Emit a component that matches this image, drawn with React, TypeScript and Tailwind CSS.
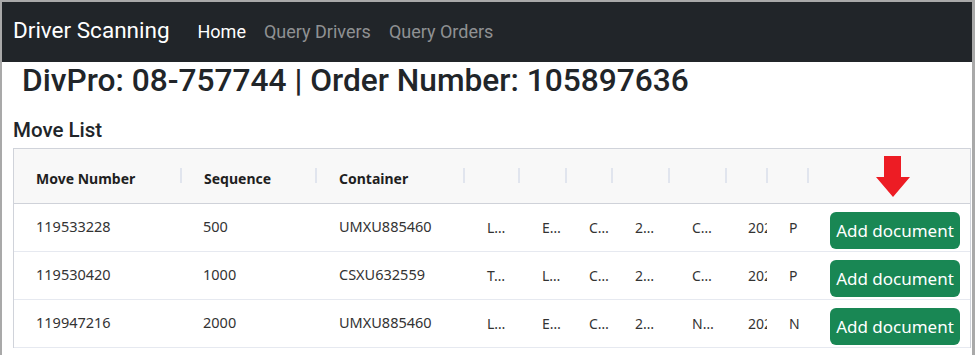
import React from 'react';

const cols = 'grid grid-cols-[168px_135px_148px_55px_47px_46px_57px_57px_41px_41px_1fr]';

const rows = [
  { move: '119533228', seq: '500', cont: 'UMXU885460', rest: ['L…', 'E…', 'C…', '2…', 'C…'], p: 'P' },
  { move: '119530420', seq: '1000', cont: 'CSXU632559', rest: ['T…', 'L…', 'C…', '2…', 'C…'], p: 'P' },
  { move: '119947216', seq: '2000', cont: 'UMXU885460', rest: ['L…', 'E…', 'C…', '2…', 'N…'], p: 'N' },
];

const HeadCell = ({ label }: { label?: string }) => (
  <div className="flex items-center justify-between pl-[22px]">
    <span className="pt-[5px] text-[14px] font-bold text-[#1f1f1f]">{label}</span>
    <span className="w-[2px] h-[15px] bg-[#e1e5ee]" />
  </div>
);

const App = () => {
  return (
    <div className="w-[975px] h-[355px] overflow-hidden bg-white border-t-2 border-l-2 border-r-[3px] border-[#a9a9a9]" style={{ fontFamily: 'Roboto, sans-serif' }}>
      {/* Navbar */}
      <nav className="h-[60px] bg-[#212529] flex items-center pl-[11px] pr-2">
        <span className="text-[22.5px] text-white mr-[28px] pb-[2px]">Driver Scanning</span>
        <div className="flex items-center gap-[18px] text-[18px] pb-[2px]">
          <span className="text-white">Home</span>
          <span className="text-[#8f9193]">Query Drivers</span>
          <span className="text-[#8f9193]">Query Orders</span>
        </div>
      </nav>

      <h1 className="pl-[20px] text-[31.7px] leading-[1.2] font-medium text-[#212529]">
        DivPro: 08-757744 | Order Number: 105897636
      </h1>

      <h2 className="pl-[11px] mt-[18px] text-[20.5px] leading-[1.2] font-medium text-[#212529]">Move List</h2>

      {/* Table */}
      <div className="ml-[11px] mr-[1px] mt-[5px] border-l border-r border-t border-[#d0d3da]" style={{ fontFamily: '"Noto Sans", "Open Sans", sans-serif' }}>
        <div className={`${cols} h-[55px] bg-[#f8f8f8] border-b border-[#cfd2d9] relative`}>
          <HeadCell label="Move Number" />
          <HeadCell label="Sequence" />
          <HeadCell label="Container" />
          <HeadCell />
          <HeadCell />
          <HeadCell />
          <HeadCell />
          <HeadCell />
          <HeadCell />
          <HeadCell />
          <div className="relative">
            <svg className="absolute left-[67px] top-[7px]" width="34" height="41" viewBox="0 0 34 41">
              <polygon points="8,0 25,0 25,21 34,21 17,41 0,21 8,21" fill="#ed1c24" />
            </svg>
          </div>
        </div>

        {rows.map((r) => (
          <div key={r.move} className={`${cols} h-[48px] border-b border-[#e6e9f0] text-[14.5px] text-[#333]`}>
            <div className="flex items-center pl-[22px]">{r.move}</div>
            <div className="flex items-center pl-[21px]">{r.seq}</div>
            <div className="flex items-center pl-[22px]">{r.cont}</div>
            {r.rest.map((t, i) => (
              <div key={i} className="flex items-center pl-[22px] text-[14px]">{t}</div>
            ))}
            <div className="flex items-center pl-[21px] text-[14px]">
              <span className="w-[19px] overflow-hidden whitespace-nowrap">202</span>
            </div>
            <div className="flex items-center pl-[21px] text-[14px]">{r.p}</div>
            <div className="flex items-center pl-[21px] pt-[6px]">
              <button className="h-[37px] w-[130px] rounded-[6px] bg-[#198754] text-white text-[17px] leading-none">
                Add document
              </button>
            </div>
          </div>
        ))}
      </div>
    </div>
  );
};

export default App;
